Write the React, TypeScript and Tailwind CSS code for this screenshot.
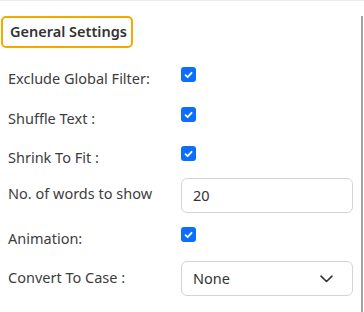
import React from 'react';

function Check() {
  return (
    <div className="w-[15px] h-[15px] rounded-[3px] bg-[#0d6efd] flex items-center justify-center shrink-0">
      <svg width="9" height="8" viewBox="0 0 9 8" fill="none">
        <path d="M1.5 4.2 L3.6 6.2 L7.6 1.8" stroke="white" strokeWidth="1.8" strokeLinecap="round" strokeLinejoin="round" />
      </svg>
    </div>
  );
}

function Label({ children }: { children: React.ReactNode }) {
  return <div className="w-[173px] shrink-0 text-[14.5px] leading-[20px] text-[#3d3d3d]">{children}</div>;
}

export default function App() {
  return (
    <div
      className="w-[364px] h-[312px] bg-white border-t border-[#ececec] overflow-hidden"
      style={{ fontFamily: '"Noto Sans", "Open Sans", sans-serif' }}
    >
      <div className="h-full mr-[1px] border-r-[2px] border-[#a3a3a3] pl-[8px]">
        {/* Section title */}
        <div className="ml-[-7px] mt-[15px] w-[132px] h-[32px] border-2 border-[#f5a800] rounded-[5px] flex items-center pl-[7px]">
          <span className="text-[14.5px] font-semibold text-[#333]">General Settings</span>
        </div>

        <div className="flex flex-col">
          <div className="flex items-start mt-[19px]">
            <Label><div className="pt-[1px]">Exclude Global Filter:</div></Label>
            <Check />
          </div>
          <div className="flex items-start mt-[19px]">
            <Label><div className="pt-[1px]">Shuffle Text :</div></Label>
            <Check />
          </div>
          <div className="flex items-start mt-[18px]">
            <Label><div className="pt-[1px]">Shrink To Fit :</div></Label>
            <Check />
          </div>
          <div className="flex items-start mt-[11px]">
            <Label><div className="pt-[5px]">No. of words to show</div></Label>
            <div className="w-[172px] h-[35px] border border-[#d4d4d4] rounded-[6px] flex items-center px-[11px] text-[14.5px] text-[#333]">
              20
            </div>
          </div>
          <div className="flex items-start mt-[14px]">
            <Label><div className="pt-[1px]">Animation:</div></Label>
            <Check />
          </div>
          <div className="flex items-start mt-[13px]">
            <Label><div className="pt-[6px]">Convert To Case :</div></Label>
            <div className="w-[172px] h-[35px] border border-[#d4d4d4] rounded-[6px] flex items-center justify-between pl-[11px] pr-[19px] text-[14.5px] text-[#333]">
              <span>None</span>
              <svg width="13" height="8" viewBox="0 0 13 8" fill="none">
                <path d="M1 1.2 L6.5 6.5 L12 1.2" stroke="#333" strokeWidth="1.6" strokeLinecap="round" strokeLinejoin="round" />
              </svg>
            </div>
          </div>
        </div>
      </div>
    </div>
  );
}
